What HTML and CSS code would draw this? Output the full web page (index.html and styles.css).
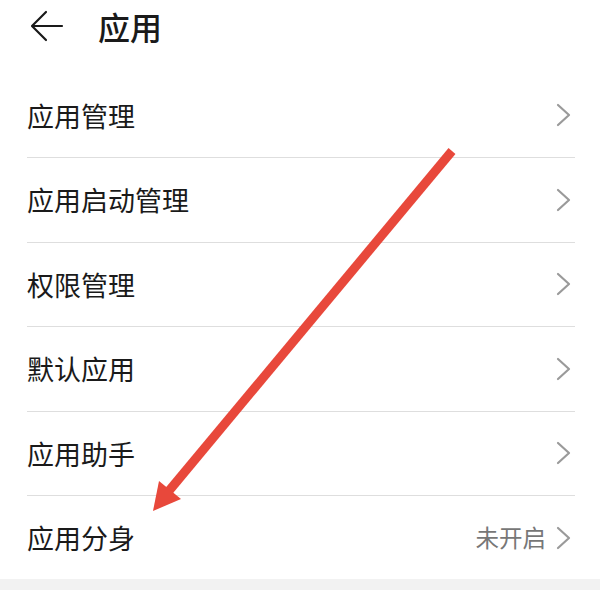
FILE: index.html
```html
<!DOCTYPE html>
<html>

<head>
  <meta charset="utf-8">
  <title>应用</title>
  <link rel="stylesheet" href="styles.css">
</head>

<body>
  <div class="screen">
    <div class="header">
      <svg class="back" width="34" height="32" viewBox="0 0 34 32">
        <path d="M32 16H3M16 2L2 16l14 14" fill="none" stroke="#1a1a1a" stroke-width="2.2" stroke-linecap="round" stroke-linejoin="round"/>
      </svg>
      <span class="title">应用</span>
    </div>
    <div class="list">
      <div class="row"><span class="label">应用管理</span><svg class="chev" width="15" height="24" viewBox="0 0 15 24"><path d="M2 2l11 10L2 22"/></svg></div>
      <div class="row"><span class="label">应用启动管理</span><svg class="chev" width="15" height="24" viewBox="0 0 15 24"><path d="M2 2l11 10L2 22"/></svg></div>
      <div class="row"><span class="label">权限管理</span><svg class="chev" width="15" height="24" viewBox="0 0 15 24"><path d="M2 2l11 10L2 22"/></svg></div>
      <div class="row"><span class="label">默认应用</span><svg class="chev" width="15" height="24" viewBox="0 0 15 24"><path d="M2 2l11 10L2 22"/></svg></div>
      <div class="row"><span class="label">应用助手</span><svg class="chev" width="15" height="24" viewBox="0 0 15 24"><path d="M2 2l11 10L2 22"/></svg></div>
      <div class="row last"><span class="label">应用分身</span><span class="value">未开启</span><svg class="chev" width="15" height="24" viewBox="0 0 15 24"><path d="M2 2l11 10L2 22"/></svg></div>
    </div>
    <div class="band"></div>
    <svg class="mark" width="600" height="590" viewBox="0 0 600 590">
      <line x1="452" y1="151" x2="168" y2="492" stroke="#e8483b" stroke-width="9"/>
      <polygon points="153,511 159,481 181,499" fill="#e8483b"/>
    </svg>
  </div>
</body>

</html>
```

FILE: styles.css
```css
body {
  margin: 0;
  background-color: #ffffff;
  font-family: "Noto Sans CJK SC", "Noto Sans", sans-serif;
}
.screen {
  position: relative;
  width: 600px;
  height: 590px;
  overflow: hidden;
}
.header {
  height: 52px;
  display: flex;
  align-items: center;
  padding-left: 30px;
}
.back {
  display: block;
}
.title {
  margin-left: 34px;
  font-size: 32px;
  font-weight: 500;
  color: #1a1a1a;
  line-height: 1;
}
.list {
  padding-top: 21.5px;
  margin: 0 25px 0 27px;
}
.row {
  height: 83.5px;
  display: flex;
  align-items: center;
  border-bottom: 1px solid #dedede;
}
.row.last {
  border-bottom: none;
  height: 83px;
}
.label {
  flex: 1;
  font-size: 27px;
  color: #1a1a1a;
  line-height: 1;
}
.value {
  font-size: 23.5px;
  color: #777777;
  margin-right: 10px;
  line-height: 1;
}
.chev {
  display: block;
  margin-right: 4px;
  fill: none;
  stroke: #9a9a9a;
  stroke-width: 2.2;
  stroke-linecap: round;
  stroke-linejoin: round;
}
.band {
  height: 11px;
  background-color: #f2f2f2;
}
.mark {
  position: absolute;
  left: 0;
  top: 0;
}
```
